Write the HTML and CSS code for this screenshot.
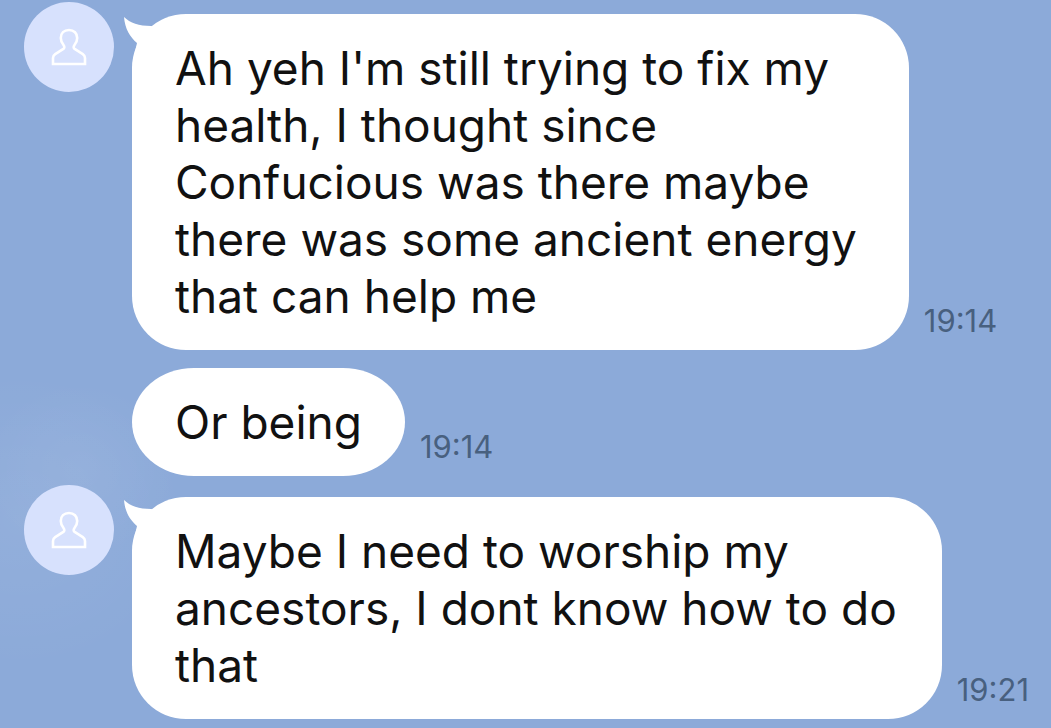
FILE: index.html
```html
<!DOCTYPE html>
<html lang="en">
<head>
<meta charset="utf-8">
<meta name="viewport" content="width=device-width, initial-scale=1">
<title>Chat</title>
<link rel="stylesheet" href="styles.css">
</head>
<body>
<main class="chat">
  <article class="message">
    <div class="avatar">
      <svg class="avatar-icon" viewBox="0 0 36 38" aria-hidden="true"><path d="M18 2C13 2 9.800 5.400 9.800 10c0 3.200 1.200 5.400 2.800 7.200 1.200 1.600.9 3-.6 4L4.200 26.200C2.700 27.200 2 28.400 2 30V36H34V30c0-1.600-.7-2.800-2.200-3.800L24 21.200c-1.500-1-1.800-2.400-.6-4 1.600-1.800 2.800-4 2.800-7.200C26.200 5.400 23 2 18 2Z"/></svg>
    </div>
    <div class="bubble bubble-wide">
      <svg class="tail" viewBox="0 0 40 44" aria-hidden="true"><path d="M0 0C6 6 15 9 27 9L40 12V44H9L13 26C6 20 1 12 0 0Z"/></svg>
      <p class="text">Ah yeh I'm still trying to fix my<br>health, I thought since<br>Confucious was there maybe<br>there was some ancient energy<br>that can help me</p>
    </div>
    <time class="time" datetime="19:14">19:14</time>
  </article>
  <article class="message message-follow">
    <div class="bubble bubble-short">
      <p class="text">Or being</p>
    </div>
    <time class="time" datetime="19:14">19:14</time>
  </article>
  <article class="message message-last">
    <div class="avatar">
      <svg class="avatar-icon" viewBox="0 0 36 38" aria-hidden="true"><path d="M18 2C13 2 9.800 5.400 9.800 10c0 3.200 1.200 5.400 2.800 7.200 1.200 1.600.9 3-.6 4L4.200 26.200C2.700 27.200 2 28.400 2 30V36H34V30c0-1.600-.7-2.800-2.200-3.800L24 21.200c-1.500-1-1.800-2.400-.6-4 1.600-1.800 2.800-4 2.800-7.200C26.200 5.400 23 2 18 2Z"/></svg>
    </div>
    <div class="bubble">
      <svg class="tail" viewBox="0 0 40 44" aria-hidden="true"><path d="M0 0C6 6 15 9 27 9L40 12V44H9L13 26C6 20 1 12 0 0Z"/></svg>
      <p class="text">Maybe I need to worship my<br>ancestors, I dont know how to do<br>that</p>
    </div>
    <time class="time" datetime="19:21">19:21</time>
  </article>
</main>
</body>
</html>
```
FILE: styles.css
```css
* {
  box-sizing: border-box;
}

body {
  margin: 0;
  min-height: 100vh;
  background:
    radial-gradient(ellipse 100px 90px at 80px 470px, rgba(255, 255, 255, 0.05), transparent),
    radial-gradient(ellipse 170px 150px at 20px 520px, rgba(255, 255, 255, 0.06), transparent),
    #8caad9;
  color: #111;
  font-family: Inter, "Liberation Sans", sans-serif;
}

.chat {
  padding: 2px 16px 9px 24px;
}

.message {
  display: flex;
  align-items: flex-end;
}

.message-follow {
  margin-top: 18px;
  padding-left: 108px;
}

.message-last {
  margin-top: 9px;
}

.avatar {
  flex: none;
  align-self: flex-start;
  display: grid;
  place-items: center;
  width: 90px;
  height: 90px;
  margin-right: 18px;
  border-radius: 50%;
  background: #d7e1fd;
}

.avatar-icon {
  width: 36px;
  height: 38px;
  fill: none;
  stroke: #fff;
  stroke-width: 2.6;
}

.bubble {
  position: relative;
  margin-top: 12px;
  padding: 26px 45px 25px 43px;
  border-radius: 54px;
  background: #fff;
}

.bubble-wide {
  padding-right: 52px;
}

.bubble-short {
  margin-top: 0;
  padding-right: 43px;
  border-radius: 62px / 54px;
}

.tail {
  position: absolute;
  top: 3px;
  left: -8px;
  width: 40px;
  height: 44px;
  fill: #fff;
}

.text {
  margin: 0;
  font-size: 46px;
  line-height: 57px;
  white-space: nowrap;
}

.time {
  margin: 0 0 11px 15px;
  color: #48607f;
  font-size: 31px;
  line-height: 36px;
}
```
